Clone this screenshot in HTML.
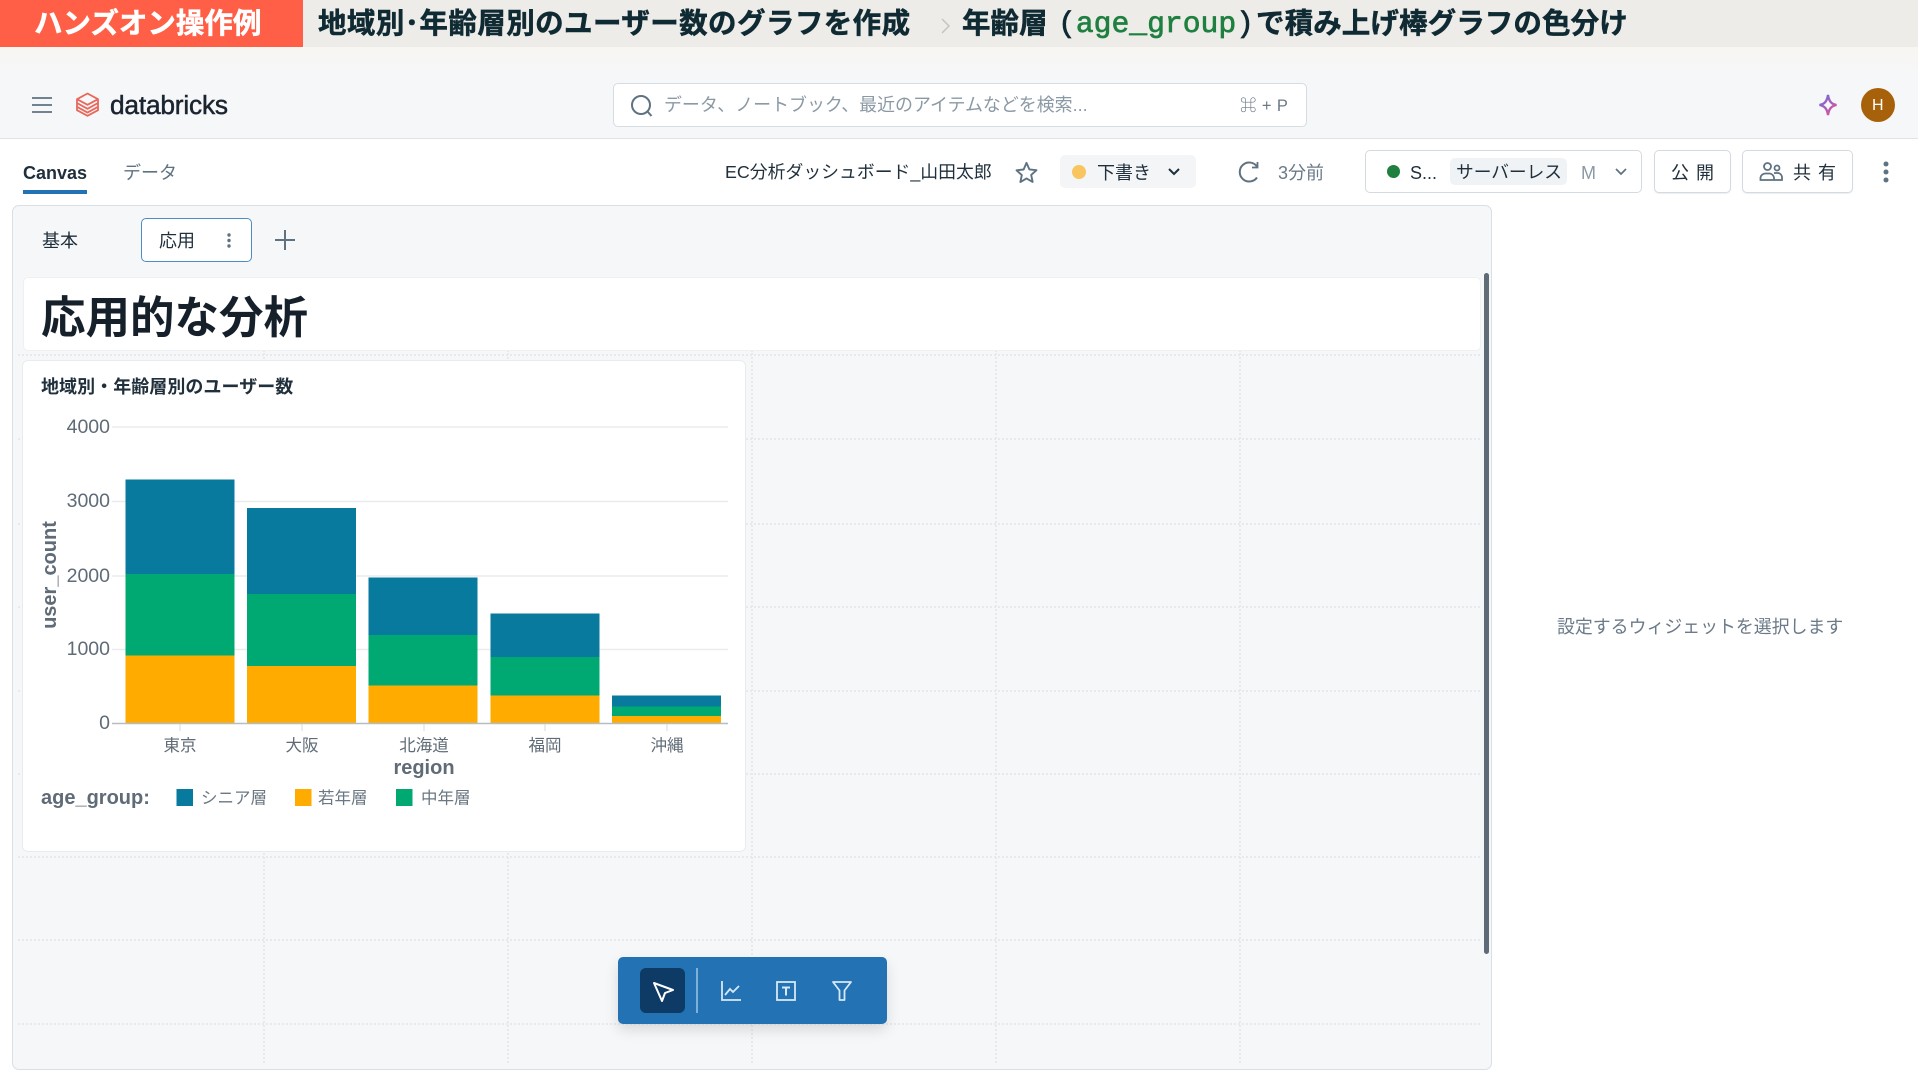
<!DOCTYPE html>
<html lang="ja"><head><meta charset="utf-8"><title>Databricks Dashboard</title>
<style>
html,body{margin:0;padding:0;width:1918px;height:1080px;overflow:hidden;background:#fff}
body{font-family:"Liberation Sans","Noto Sans CJK JP",sans-serif;position:relative;color:#1f2f3b}
.a{position:absolute;box-sizing:border-box}
.t{position:absolute;white-space:nowrap;line-height:1;transform:translateY(-50%)}
svg{position:absolute;overflow:visible}
.btn{position:absolute;box-sizing:border-box;background:#fff;border:1.5px solid #d3dbe2;border-radius:5px;box-shadow:0 1px 1px rgba(0,0,0,.07)}
.dv{position:absolute;width:0;border-left:2px dotted #e7e9ec}
.dh{position:absolute;height:0;border-top:2px dotted #e7e9ec}
.h{-webkit-text-stroke:.5px currentColor}
</style></head><body>
<!-- top banner -->
<div class="a" style="left:0;top:0;width:1918px;height:47px;background:#eeece8"></div>
<div class="a" style="left:0;top:47px;width:1918px;height:30px;background:linear-gradient(#f8f6f2,#f6f7f9)"></div>
<div class="a" style="left:0;top:0;width:303px;height:47px;background:#ff5f46"></div>
<div class="t h" style="left:34px;top:24px;font-size:28.5px;font-weight:700;color:#fff">ハンズオン操作例</div>
<div class="t h" style="left:318px;top:24px;font-size:28.5px;font-weight:700;color:#0f2a33;letter-spacing:.42px">地域別･年齢層別のユーザー数のグラフを作成</div>
<svg style="left:940px;top:18px" width="12" height="16" viewBox="0 0 12 16"><path d="M2 1l7 7-7 7" fill="none" stroke="#c4c4c2" stroke-width="1.5"/></svg>
<div class="t h" style="left:962px;top:24px;font-size:28.5px;font-weight:700;color:#0f2a33">年齢層</div>
<div class="t" style="left:1058px;top:24.500px;font-size:29.7px;color:#0f2a33;font-family:'Liberation Mono',monospace;-webkit-text-stroke:.7px currentColor">(<span style="color:#1f8040">age_group</span>)</div>
<div class="t h" style="left:1256px;top:24px;font-size:28.5px;font-weight:700;color:#0f2a33;letter-spacing:.1px">で積み上げ棒グラフの色分け</div>
<!-- header -->
<div class="a" style="left:0;top:77px;width:1918px;height:62px;background:#f6f7f9;border-bottom:1.5px solid #dfe3e7"></div>
<svg style="left:31px;top:96px" width="22" height="18" viewBox="0 0 22 18"><path d="M1 2h20M1 9h20M1 16h20" stroke="#5f7281" stroke-width="1.8" fill="none"/></svg>
<svg style="left:75px;top:92px" width="25" height="25" viewBox="0 0 25 25" fill="none" stroke="#e8685c" stroke-width="1.8" stroke-linejoin="round"><path d="M12.500 1.500L23 7.200 12.500 12.800 2 7.200z"/><path d="M2 7.200V11l10.500 5.800L23 11V7.200"/><path d="M2 11v3.800l10.500 5.800L23 14.800V11"/><path d="M2 14.800v3.400l10.500 5.600L23 18.200v-3.400"/></svg>
<div class="t" style="left:110px;top:105px;font-size:26.300px;font-weight:400;color:#1b2530;letter-spacing:-.2px;-webkit-text-stroke:.5px #1b2530">databricks</div>
<div class="a" style="left:613px;top:83px;width:694px;height:44px;background:#fff;border:1.5px solid #d5dce2;border-radius:5px"></div>
<svg style="left:630px;top:94px" width="24" height="24" viewBox="0 0 24 24" fill="none" stroke="#5f7281" stroke-width="2"><circle cx="11" cy="11" r="9"/><path d="M17.500 17.500L21.500 22"/></svg>
<div class="t" style="left:664px;top:106px;font-size:17.950px;color:#8b99a5">データ、ノートブック、最近のアイテムなどを検索...</div>
<div class="t" style="left:1240px;top:105.500px;font-size:16.500px;letter-spacing:.4px;color:#6b7a88">⌘ + P</div>
<svg style="left:1818px;top:94px" width="20" height="22" viewBox="0 0 20 22" fill="none" stroke-width="2.300"><defs><linearGradient id="g" x1="0" y1="0" x2="1" y2="1"><stop offset="0" stop-color="#5f6ee8"/><stop offset="1" stop-color="#f0508c"/></linearGradient></defs><path d="M10 1C11 7 13 10 18.500 11 13 12 11 15 10 21 9 15 7 12 1.500 11 7 10 9 7 10 1z" stroke="url(#g)"/></svg>
<div class="a" style="left:1861px;top:88px;width:34px;height:34px;border-radius:50%;background:#a8610b"></div>
<div class="t" style="left:1872px;top:105.500px;font-size:16px;color:#fff">H</div>
<!-- tab row -->
<div class="t" style="left:23px;top:172.500px;font-size:18px;font-weight:700;color:#1f2f3b">Canvas</div>
<div class="a" style="left:23px;top:190px;width:64px;height:4px;background:#2272b4"></div>
<div class="t" style="left:123px;top:173px;font-size:18px;color:#5f7281">データ</div>
<div class="t" style="left:725px;top:173px;font-size:17.850px;color:#1f2f3b">EC分析ダッシュボード_山田太郎</div>
<svg style="left:1015px;top:161px" width="23" height="22" viewBox="0 0 24 23" fill="none" stroke="#5f7281" stroke-width="2" stroke-linejoin="round"><path d="M12 2l3 6.800 7.400.8-5.500 5 1.500 7.300L12 18.200 5.600 22l1.500-7.300-5.500-5 7.400-.8z"/></svg>
<div class="a" style="left:1060px;top:155px;width:136px;height:33px;background:#f3f5f7;border-radius:5px"></div>
<div class="a" style="left:1072px;top:165px;width:14px;height:14px;border-radius:50%;background:#f8c55f"></div>
<div class="t" style="left:1097px;top:173px;font-size:18px;color:#1f2f3b">下書き</div>
<svg style="left:1168px;top:168px" width="12" height="8" viewBox="0 0 12 8"><path d="M1 1l5 5 5-5" fill="none" stroke="#1f2f3b" stroke-width="2"/></svg>
<svg style="left:1238px;top:161px" width="22" height="22" viewBox="0 0 22 22" fill="none" stroke="#5f7281" stroke-width="2"><path d="M19 5.500A9.500 9.500 0 1 0 19 16.500"/><path d="M19.500 1v5.500H14" stroke-width="1.800"/></svg>
<div class="t" style="left:1278px;top:173px;font-size:18px;color:#6b7a88">3分前</div>
<div class="btn" style="left:1365px;top:150px;width:277px;height:43px;box-shadow:none"></div>
<div class="a" style="left:1387px;top:165px;width:13px;height:13px;border-radius:50%;background:#1f8040"></div>
<div class="t" style="left:1410px;top:173px;font-size:18px;color:#1f2f3b">S...</div>
<div class="a" style="left:1450px;top:158px;width:117px;height:27px;background:#f0f3f5;border-radius:5px"></div>
<div class="t" style="left:1456px;top:173px;font-size:17.700px;color:#1f2f3b">サーバーレス</div>
<div class="t" style="left:1581px;top:173px;font-size:18px;color:#8b99a5">M</div>
<svg style="left:1615px;top:168px" width="12" height="8" viewBox="0 0 12 8"><path d="M1 1l5 5 5-5" fill="none" stroke="#5f7281" stroke-width="1.700"/></svg>
<div class="btn" style="left:1654px;top:150px;width:77px;height:43px"></div>
<div class="t" style="left:1671px;top:173px;font-size:18px;letter-spacing:7px;color:#1f2f3b">公開</div>
<div class="btn" style="left:1742px;top:150px;width:111px;height:43px"></div>
<svg style="left:1759px;top:162px" width="24" height="20" viewBox="0 0 24 20" fill="none" stroke="#5f7281" stroke-width="1.800"><circle cx="8.500" cy="4.500" r="3.500"/><circle cx="18" cy="6" r="2.500"/><path d="M1.500 18v-2.500a5 5 0 0 1 5-4h4a5 5 0 0 1 4.500 4V18zM15 11h3.500a4.500 4.500 0 0 1 4.500 4v3h-8"/></svg>
<div class="t" style="left:1793px;top:173px;font-size:18px;letter-spacing:7px;color:#1f2f3b">共有</div>
<svg style="left:1881px;top:161px" width="10" height="22" viewBox="0 0 10 22" fill="#5f7281"><circle cx="5" cy="3" r="2.500"/><circle cx="5" cy="11" r="2.500"/><circle cx="5" cy="19" r="2.500"/></svg>
<!-- canvas panel -->
<div class="a" style="left:12px;top:205px;width:1480px;height:865px;background:#f6f7f9;border:1.5px solid #d8dfe5;border-radius:7px"></div>
<div id="grid">
<div class="dv" style="left:263px;top:350px;height:713px"></div>
<div class="dv" style="left:507px;top:350px;height:713px"></div>
<div class="dv" style="left:751px;top:350px;height:713px"></div>
<div class="dv" style="left:995px;top:350px;height:713px"></div>
<div class="dv" style="left:1239px;top:350px;height:713px"></div>
<div class="dh" style="left:18px;top:354px;width:1462px"></div>
<div class="dh" style="left:18px;top:438px;width:1462px"></div>
<div class="dh" style="left:18px;top:523px;width:1462px"></div>
<div class="dh" style="left:18px;top:606px;width:1462px"></div>
<div class="dh" style="left:18px;top:690px;width:1462px"></div>
<div class="dh" style="left:18px;top:773px;width:1462px"></div>
<div class="dh" style="left:18px;top:856px;width:1462px"></div>
<div class="dh" style="left:18px;top:939px;width:1462px"></div>
<div class="dh" style="left:18px;top:1023px;width:1462px"></div>
</div>
<div class="t" style="left:42px;top:240.500px;font-size:18px;color:#1f2f3b">基本</div>
<div class="a" style="left:141px;top:218px;width:111px;height:44px;background:#fff;border:1.5px solid #4f8dc0;border-radius:5px"></div>
<div class="t" style="left:159px;top:240.500px;font-size:18px;color:#1f2f3b">応用</div>
<svg style="left:226px;top:233px" width="6" height="15" viewBox="0 0 6 15" fill="#5f7281"><circle cx="3" cy="2" r="1.700"/><circle cx="3" cy="7.500" r="1.700"/><circle cx="3" cy="13" r="1.700"/></svg>
<svg style="left:275px;top:230px" width="20" height="20" viewBox="0 0 20 20"><path d="M10 0v20M0 10h20" stroke="#5f7281" stroke-width="2"/></svg>
<div class="a" style="left:24px;top:278px;width:1456px;height:72px;background:#fff;border-radius:4px;box-shadow:0 0 0 1px #eef0f2"></div>
<div class="t" style="left:41px;top:318.500px;font-size:44.500px;font-weight:700;color:#16202b">応用的な分析</div>
<div class="a" style="left:1484px;top:273px;width:5px;height:681px;background:#5f6b76;border-radius:3px"></div>
<!-- chart card -->
<div class="a" style="left:23px;top:361px;width:722px;height:490px;background:#fff;border-radius:5px;box-shadow:0 0 0 1px #e9ecef"></div>
<div class="t" style="left:41px;top:387px;font-size:18px;font-weight:700;letter-spacing:.05px;color:#1f2f3b">地域別・年齢層別のユーザー数</div>
<svg style="left:0;top:0" width="1918" height="1080" viewBox="0 0 1918 1080">
<g stroke="#e9ecef" stroke-width="1.500"><path d="M112 427H728M112 501.500H728M112 576H728M112 649.500H728"/></g>
<g fill="#077a9d"><rect x="125.500" y="479.500" width="109" height="94.500"/><rect x="247" y="508" width="109" height="86"/><rect x="368.500" y="577.500" width="109" height="57.500"/><rect x="490.500" y="613.500" width="109" height="43.500"/><rect x="612" y="695.500" width="109" height="11"/></g>
<g fill="#00a972"><rect x="125.500" y="574" width="109" height="81.500"/><rect x="247" y="594" width="109" height="72"/><rect x="368.500" y="635" width="109" height="50.500"/><rect x="490.500" y="657" width="109" height="38.500"/><rect x="612" y="706.500" width="109" height="9.500"/></g>
<g fill="#ffab00"><rect x="125.500" y="655.500" width="109" height="67.500"/><rect x="247" y="666" width="109" height="57"/><rect x="368.500" y="685.500" width="109" height="37.500"/><rect x="490.500" y="695.500" width="109" height="27.500"/><rect x="612" y="716" width="109" height="7"/></g>
<path d="M112 723.500H728" stroke="#b3bdc6" stroke-width="1.500"/>
<g stroke="#d5dadf" stroke-width="1"><path d="M180 724v7M302 724v7M424 724v7M545 724v7M667 724v7"/></g>
<g font-family="Liberation Sans" font-size="19.500" fill="#5f6b76" text-anchor="end"><text x="110" y="433">4000</text><text x="110" y="507">3000</text><text x="110" y="582">2000</text><text x="110" y="655">1000</text><text x="110" y="729">0</text></g>
<g font-family="'Liberation Sans','Noto Sans CJK JP',sans-serif" font-size="16.500" fill="#5f6b76" text-anchor="middle"><text x="180" y="751">東京</text><text x="302" y="751">大阪</text><text x="424" y="751">北海道</text><text x="545" y="751">福岡</text><text x="667" y="751">沖縄</text></g>
<text x="424" y="774" font-family="Liberation Sans" font-size="20" font-weight="700" fill="#5f6b76" text-anchor="middle">region</text>
<text transform="translate(56,575) rotate(-90)" font-family="Liberation Sans" font-size="20" font-weight="700" fill="#5f6b76" text-anchor="middle">user_count</text>
<text x="41" y="804" font-family="Liberation Sans" font-size="20" font-weight="700" fill="#5f6b76">age_group:</text>
<rect x="176.500" y="789" width="16.500" height="17" fill="#077a9d"/><rect x="295" y="789" width="16.500" height="17" fill="#ffab00"/><rect x="396" y="789" width="16.500" height="17" fill="#00a972"/>
<g font-family="'Liberation Sans','Noto Sans CJK JP',sans-serif" font-size="16.500" fill="#6b7782"><text x="201" y="803.500">シニア層</text><text x="318" y="803.500">若年層</text><text x="421" y="803.500">中年層</text></g>
</svg>
<!-- right panel -->
<div class="t" style="left:1557px;top:627.500px;font-size:17.900px;color:#6b7a88">設定するウィジェットを選択します</div>
<!-- toolbar -->
<div class="a" style="left:618px;top:957px;width:269px;height:67px;background:#2272b4;border-radius:5px;box-shadow:0 6px 14px rgba(0,0,0,.12)"></div>
<div class="a" style="left:640px;top:968px;width:45px;height:45px;background:#0e3a66;border-radius:6px"></div>
<div class="a" style="left:696px;top:968px;width:2px;height:45px;background:#7fb0d8"></div>
<svg style="left:652px;top:981px" width="22" height="22" viewBox="0 0 22 22" fill="none" stroke="#fff" stroke-width="2" stroke-linejoin="round"><path d="M2 2l19 7-8 3-3 8z"/></svg>
<svg style="left:721px;top:981px" width="20" height="20" viewBox="0 0 20 20" fill="none" stroke="#d7e8f6" stroke-width="1.800"><path d="M1 0v19h19"/><path d="M4 14l5-6 3 3 6-6"/></svg>
<svg style="left:776px;top:981px" width="20" height="20" viewBox="0 0 20 20" fill="none" stroke="#d7e8f6" stroke-width="1.800"><rect x="1" y="1" width="18" height="18"/><path d="M6 6.500h8M10 6.500v8" stroke-width="2"/></svg>
<svg style="left:832px;top:981px" width="20" height="20" viewBox="0 0 20 20" fill="none" stroke="#d7e8f6" stroke-width="1.800" stroke-linejoin="round"><path d="M1 1h18l-6.500 8.500V19h-5V9.500z"/></svg>
</body></html>
